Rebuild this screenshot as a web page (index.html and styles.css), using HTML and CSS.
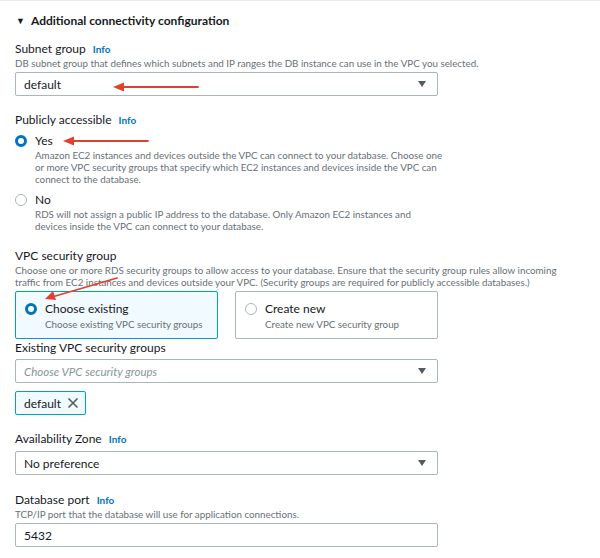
FILE: index.html
```html
<!DOCTYPE html>
<html>
<head>
<meta charset="utf-8">
<link rel="stylesheet" href="styles.css">
</head>
<body>
<div class="page">
  <div class="section-title"><span class="caret">▼</span>Additional connectivity configuration</div>

  <div class="field f-subnet">
    <div class="label">Subnet group <span class="info">Info</span></div>
    <div class="desc">DB subnet group that defines which subnets and IP ranges the DB instance can use in the VPC you selected.</div>
    <div class="select"><span class="value">default</span><span class="tri"></span></div>
  </div>

  <div class="field f-public">
    <div class="label">Publicly accessible <span class="info">Info</span></div>
    <div class="radio-row">
      <span class="radio on"></span>
      <div class="radio-body">
        <div class="radio-label">Yes</div>
        <div class="desc">Amazon EC2 instances and devices outside the VPC can connect to your database. Choose one<br>or more VPC security groups that specify which EC2 instances and devices inside the VPC can<br>connect to the database.</div>
      </div>
    </div>
    <div class="radio-row no">
      <span class="radio"></span>
      <div class="radio-body">
        <div class="radio-label">No</div>
        <div class="desc">RDS will not assign a public IP address to the database. Only Amazon EC2 instances and<br>devices inside the VPC can connect to your database.</div>
      </div>
    </div>
  </div>

  <div class="field f-vpc">
    <div class="label">VPC security group</div>
    <div class="desc">Choose one or more RDS security groups to allow access to your database. Ensure that the security group rules allow incoming<br>traffic from EC2 instances and devices outside your VPC. (Security groups are required for publicly accessible databases.)</div>
    <div class="cards">
      <div class="card selected">
        <span class="radio on"></span>
        <div>
          <div class="radio-label">Choose existing</div>
          <div class="card-desc">Choose existing VPC security groups</div>
        </div>
      </div>
      <div class="card">
        <span class="radio"></span>
        <div>
          <div class="radio-label">Create new</div>
          <div class="card-desc">Create new VPC security group</div>
        </div>
      </div>
    </div>
  </div>

  <div class="field f-existing">
    <div class="label">Existing VPC security groups</div>
    <div class="select"><span class="placeholder">Choose VPC security groups</span><span class="tri"></span></div>
    <div class="token">default
      <svg class="x" width="12" height="12" viewBox="0 0 12 12"><path d="M1.5 1.5 L10.5 10.5 M10.5 1.5 L1.5 10.5" stroke="#545b64" stroke-width="1.6" fill="none"/></svg>
    </div>
  </div>

  <div class="field f-az">
    <div class="label">Availability Zone <span class="info">Info</span></div>
    <div class="select"><span class="value">No preference</span><span class="tri"></span></div>
  </div>

  <div class="field f-port">
    <div class="label">Database port <span class="info">Info</span></div>
    <div class="desc">TCP/IP port that the database will use for application connections.</div>
    <div class="select input"><span class="value">5432</span></div>
  </div>

  <svg class="annot" width="600" height="558" viewBox="0 0 600 558">
    <g stroke="#e0412f" stroke-width="1.8" fill="none" stroke-linecap="round">
      <line x1="198" y1="87" x2="120" y2="87"/>
      <line x1="148" y1="141" x2="70" y2="141"/>
      <line x1="117" y1="278" x2="52" y2="297"/>
    </g>
    <g fill="#e0412f">
      <polygon points="113,87 124,82.5 124,91.5"/>
      <polygon points="63,141 74,136.5 74,145.5"/>
      <polygon points="45,299 53,291 56,300"/>
    </g>
  </svg>
</div>
</body>
</html>
```

FILE: styles.css
```css
* { box-sizing: border-box; }
html, body { margin: 0; padding: 0; background: #fff; }
body {
  font-family: Lato, "Open Sans", "Liberation Sans", Arial, sans-serif;
  color: #16191f;
  width: 600px;
  height: 558px;
  overflow: hidden;
}
.page {
  position: relative;
  border-top: 1px solid #eaeded;
  padding: 12px 0 0 15px;
  width: 600px;
  height: 558px;
}
.section-title {
  font-size: 12px;
  font-weight: 700;
  line-height: 16px;
  color: #16191f;
  display: flex;
  align-items: center;
}
.caret {
  font-size: 9px;
  margin: 0 6px 0 1px;
  color: #16191f;
}
.field { width: 423px; }
.label {
  font-size: 12px;
  line-height: 16px;
  color: #16191f;
}
.info {
  color: #0073bb;
  font-weight: 700;
  font-size: 10px;
  margin-left: 4px;
}
.desc {
  font-size: 9.8px;
  line-height: 12px;
  color: #687078;
  white-space: nowrap;
}
.select {
  height: 24px;
  border: 1px solid #aab7b8;
  border-radius: 2px;
  display: flex;
  align-items: center;
  justify-content: space-between;
  padding: 0 10px 0 8px;
  margin-top: 3px;
}
.value { font-size: 12px; color: #16191f; }
.placeholder { font-size: 11.5px; color: #879596; font-style: italic; }
.tri {
  width: 0; height: 0;
  border-left: 4.5px solid transparent;
  border-right: 4.5px solid transparent;
  border-top: 6px solid #545b64;
  margin-right: 1px;
}
.f-subnet { margin-top: 12px; }
.f-public { margin-top: 16px; }
.radio-row { display: flex; margin-top: 5px; }
.radio-row.no { margin-top: 7px; }
.radio {
  flex: none;
  width: 12px; height: 12px;
  border-radius: 50%;
  border: 1px solid #aab7b8;
  background: #fff;
  margin-top: 2px;
  margin-right: 8px;
}
.radio.on { border: 3.5px solid #0073bb; }
.radio-label { font-size: 12px; line-height: 16px; color: #16191f; }
.f-vpc { margin-top: 16px; }
.cards { display: flex; gap: 17px; margin-top: 3px; }
.card {
  flex: 1;
  height: 48px;
  border: 1px solid #aab7b8;
  border-radius: 2px;
  display: flex;
  align-items: flex-start;
  padding: 9px 8px 0 9px;
}
.card.selected { background: #f1faff; border-color: #00a1c9; }
.card-desc { font-size: 9.8px; line-height: 12px; color: #687078; margin-top: 1px; }
.f-existing { margin-top: 1px; }
.f-existing .select { margin-top: 3px; }
.token {
  display: inline-flex;
  align-items: center;
  gap: 6px;
  height: 24px;
  margin-top: 8px;
  padding: 0 6px 0 8px;
  border: 1px solid #00a1c9;
  border-radius: 2px;
  background: #f1faff;
  font-size: 12px;
  color: #16191f;
}
.f-az { margin-top: 16px; }
.f-az .select { margin-top: 4px; }
.f-port { margin-top: 17px; }
.f-port .select { margin-top: 3px; }
.annot { position: absolute; left: 0; top: -1px; pointer-events: none; }
```
